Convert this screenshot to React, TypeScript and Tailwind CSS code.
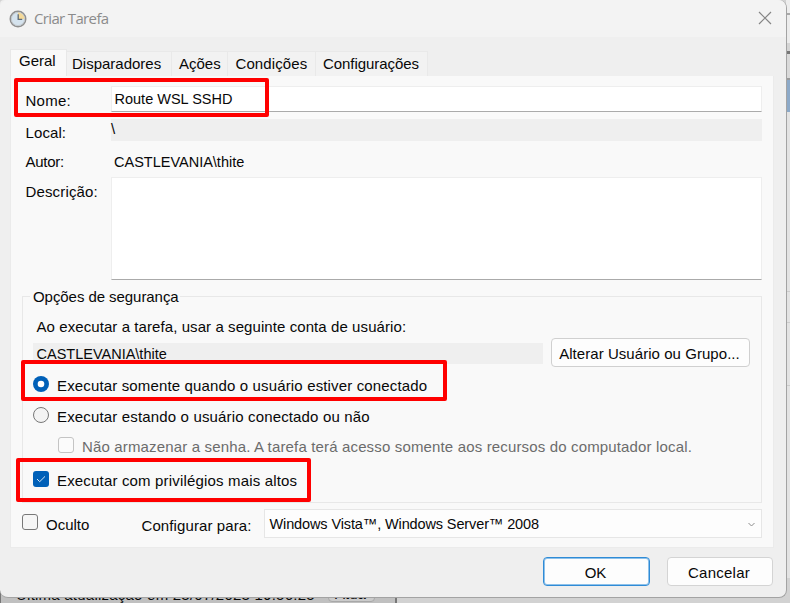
import React from "react";

function Text({ className = "", children }: { className?: string; children: React.ReactNode }) {
  return <span className={"block h-5 shrink-0 whitespace-pre leading-[20px] " + className}>{children}</span>;
}

function Tab({ className, children }: { className: string; children: React.ReactNode }) {
  return (
    <div className={"mt-0.5 flex h-[25px] border-t border-r border-[#e9e9e9] bg-[#f2f2f2] pt-0.5 " + className}>
      <Text>{children}</Text>
    </div>
  );
}

function Background() {
  return (
    <div className="flex h-full flex-col bg-[#d2d2d2]">
      <div className="ml-auto flex h-[578px] w-1 flex-col bg-[#e3e3e3]">
        <div className="h-[13px] bg-[#ededed]" />
        <div className="h-0.5 bg-[#a9a9a9]" />
        <div className="h-7 bg-[#ececec]" />
        <div className="h-2 bg-[#d5d5d5]" />
        <div className="h-[3px] bg-[#777777]" />
        <div className="h-[24px] bg-[#d9d9d9]" />
        <div className="h-0.5 bg-[#9a9a9a]" />
        <div className="h-[32px] bg-[#8ca9c8]" />
        <div className="h-[179px]" />
        <div className="h-px bg-[#cccccc]" />
        <div className="h-[30px]" />
        <div className="h-px bg-[#cccccc]" />
        <div className="h-[62px]" />
        <div className="h-px bg-[#cccccc]" />
      </div>
      <div className="flex h-[25px] w-[397px] border-r-2 border-l border-[#777777] bg-[#c0c0c0] pt-[9px] pl-[15px]">
        <span className="block h-4 w-[312px] leading-[16px] tracking-[0.23px] whitespace-pre">Última atualização em 23/07/2023 19:56:25</span>
        <div className="-mt-2 h-[23px] w-[47px] rounded-b border border-[#a8a8a8] bg-[#cbcbcb] pt-1.5 pl-1.5">
          <span className="block h-4 leading-[16px]">Atua</span>
        </div>
      </div>
    </div>
  );
}

export default function App() {
  return (
    <div className="relative h-[603px] w-[790px] overflow-hidden font-['Liberation_Sans',Arial,sans-serif] text-[15px] text-[#080808]">
      <Background />
      <div className="absolute top-0 left-0 flex h-[598px] w-[787px] flex-col rounded-tl-[4px] rounded-tr-lg rounded-b-lg border-r border-b border-[#a3a3a3] bg-[#efefef]">
        <header className="flex h-[37px] shrink-0 items-center rounded-t-lg bg-[#f3f3f3] pl-[9px]">
          <svg width="18" height="18" viewBox="0 0 18 18" fill="none">
            <circle cx="9" cy="9" r="7.7" fill="#d5e3ee" stroke="#8f8f8f" strokeWidth="1.6" />
            <circle cx="9" cy="9" r="6.6" stroke="#c3c9cd" strokeWidth="1" />
            <path d="M9 9V2.6A6.4 6.4 0 0 1 15.4 9Z" fill="#f4d999" />
            <path d="M9.2 4.2v5.2h4" stroke="#5f6c78" strokeWidth="1.3" />
          </svg>
          <Text className="-mt-0.5 ml-[7px] font-['Open_Sans','Noto_Sans',sans-serif] text-[15px] tracking-[-0.65px] text-[#8b8b8b]">Criar Tarefa</Text>
          <svg className="mr-[14px] ml-auto -mt-px" width="14" height="14" viewBox="0 0 14 14" fill="none" stroke="#858585" strokeWidth="1.2">
            <path d="M1 1l12 12M13 1L1 13" />
          </svg>
        </header>

        <nav className="mt-3 ml-2.5 flex h-[27px] shrink-0">
          <div className="h-7 w-[57px] border-x border-t border-[#e8e8e8] bg-[#f9f9f9] pt-px pl-2">
            <Text>Geral</Text>
          </div>
          <Tab className="w-[105px] pl-[5px]">Disparadores</Tab>
          <Tab className="w-[56px] pl-[7px]">Ações</Tab>
          <Tab className="w-[88px] pl-[7.5px] tracking-[0.1px]">Condições</Tab>
          <Tab className="w-[112px] pl-[7px] tracking-[-0.05px]">Configurações</Tab>
        </nav>

        <main className="ml-2.5 flex h-[472px] w-[764px] shrink-0 flex-col border border-t-0 border-[#ebebeb] bg-[#f9f9f9] px-[11px]">
          <div className="mt-2.5 flex h-[26px] pl-[3.5px]">
            <Text className="w-[85.5px] pt-[5px] tracking-[0.25px]">Nome:</Text>
            <div className="flex-1 border border-[#eeeeee] border-b-[#aaaaaa] bg-white pt-0.5 pl-[2.5px]">
              <Text className="text-[14.5px]">Route WSL SSHD</Text>
            </div>
          </div>
          <div className="mt-[7px] flex h-[22px] pl-[3.5px]">
            <Text className="w-[85.5px] pt-1 tracking-[0.1px]">Local:</Text>
            <div className="flex-1 bg-[#efefef]"><Text className="leading-[18px]">\</Text></div>
          </div>
          <div className="mt-[11px] flex h-5 pl-[3.5px]">
            <Text className="w-[85.5px] tracking-[-0.25px]">Autor:</Text>
            <Text className="pl-[3px] text-[14.5px]">CASTLEVANIA\thite</Text>
          </div>
          <div className="mt-[5px] flex h-[103px] pl-[3.5px]">
            <Text className="w-[85.5px] pt-[5px] tracking-[0.15px]">Descrição:</Text>
            <div className="flex-1 border border-[#eeeeee] border-b-[#aaaaaa] bg-white" />
          </div>

          <section className="mt-4 h-[207px] shrink-0 border border-[#e8e8e8] pl-2.5">
            <div className="-mt-2.5 -ml-[3px] w-[150px] bg-[#f9f9f9] pl-[3px]"><Text className="tracking-[-0.06px]">Opções de segurança</Text></div>
            <Text className="mt-2.5 pl-[3.5px] tracking-[0.08px]">Ao executar a tarefa, usar a seguinte conta de usuário:</Text>
            <div className="mt-px flex h-[29px]">
              <div className="mt-[5px] h-[21px] w-[510px] bg-[#efefef] pt-px pl-[3.5px]"><Text className="text-[14.5px]">CASTLEVANIA\thite</Text></div>
              <button className="ml-2 flex w-[199px] justify-center rounded border border-[#d0d0d0] bg-[#fdfdfd] pt-[5px] pr-0.5"><Text className="tracking-[0.05px]">Alterar Usuário ou Grupo...</Text></button>
            </div>
            <div className="mt-[9px] flex h-5">
              <svg width="16" height="16" viewBox="0 0 16 16"><circle cx="8" cy="8" r="8" fill="#0060b8" /><circle cx="8" cy="8" r="3.3" fill="#fff" /></svg>
              <Text className="ml-2 tracking-[0.147px]">Executar somente quando o usuário estiver conectado</Text>
            </div>
            <div className="mt-[11px] flex h-5">
              <div className="h-4 w-4 rounded-full border border-[#787878] bg-[#f3f3f3]" />
              <Text className="ml-2 tracking-[0.156px]">Executar estando o usuário conectado ou não</Text>
            </div>
            <div className="mt-2.5 ml-[25px] flex h-5 text-[#6c6c6c]">
              <div className="h-4 w-4 rounded-[3px] border border-[#c4c4c4] bg-[#fbfbfb]" />
              <Text className="ml-2 tracking-[0.153px]">Não armazenar a senha. A tarefa terá acesso somente aos recursos do computador local.</Text>
            </div>
            <div className="mt-[14px] flex h-5">
              <div className="flex h-4 w-4 items-center justify-center rounded-[3px] bg-[#0060b8]">
                <svg width="10" height="8" viewBox="0 0 10 8" fill="none" stroke="#d7e8f7" strokeWidth="1"><path d="M1 4l2.7 2.7L9 1.4" /></svg>
              </div>
              <Text className="ml-2 tracking-[0.17px]">Executar com privilégios mais altos</Text>
            </div>
          </section>

          <div className="mt-1.5 flex h-[29px] shrink-0">
            <div className="mt-[5px] h-4 w-4 rounded-[3px] border border-[#787878] bg-[#f6f6f6]" />
            <Text className="mt-[5.5px] ml-2 w-[95.5px]">Oculto</Text>
            <Text className="mt-[7px] w-[122.5px] tracking-[0.1px]">Configurar para:</Text>
            <div className="flex flex-1 justify-between border border-[#e6e6e6] bg-[#fdfdfd] pt-1 pr-1.5 pl-[4.5px]">
              <Text className="text-[14.5px] tracking-[-0.12px]">Windows Vista™, Windows Server™ 2008</Text>
              <svg className="mt-2" width="7" height="5" viewBox="0 0 7 5" fill="none" stroke="#8c8c8c" strokeWidth="1"><path d="M.5 1l3 3 3-3" /></svg>
            </div>
          </div>
        </main>

        <footer className="mt-[9px] mr-[13px] flex h-[29px] shrink-0 justify-end gap-[17px]">
          <button className="flex w-[107px] justify-center rounded border border-[#2f8bd6] bg-[#fdfdfd] pt-[5px] pr-0.5 ring-1 ring-[#8dc1ea] ring-inset"><Text>OK</Text></button>
          <button className="flex w-[106px] justify-center rounded border border-[#d4d4d4] bg-[#fdfdfd] pt-[5px] pr-0.5"><Text className="tracking-[0.25px]">Cancelar</Text></button>
        </footer>
      </div>

      <div className="absolute top-[78px] left-[14px] h-[39px] w-[255px] rounded-[2px] border-4 border-[#ff0000]" />
      <div className="absolute top-[360px] left-[21px] h-[41px] w-[426px] rounded-[2px] border-4 border-[#ff0000]" />
      <div className="absolute top-[458px] left-[16px] h-[44px] w-[295px] rounded-[2px] border-4 border-[#ff0000]" />
    </div>
  );
}
